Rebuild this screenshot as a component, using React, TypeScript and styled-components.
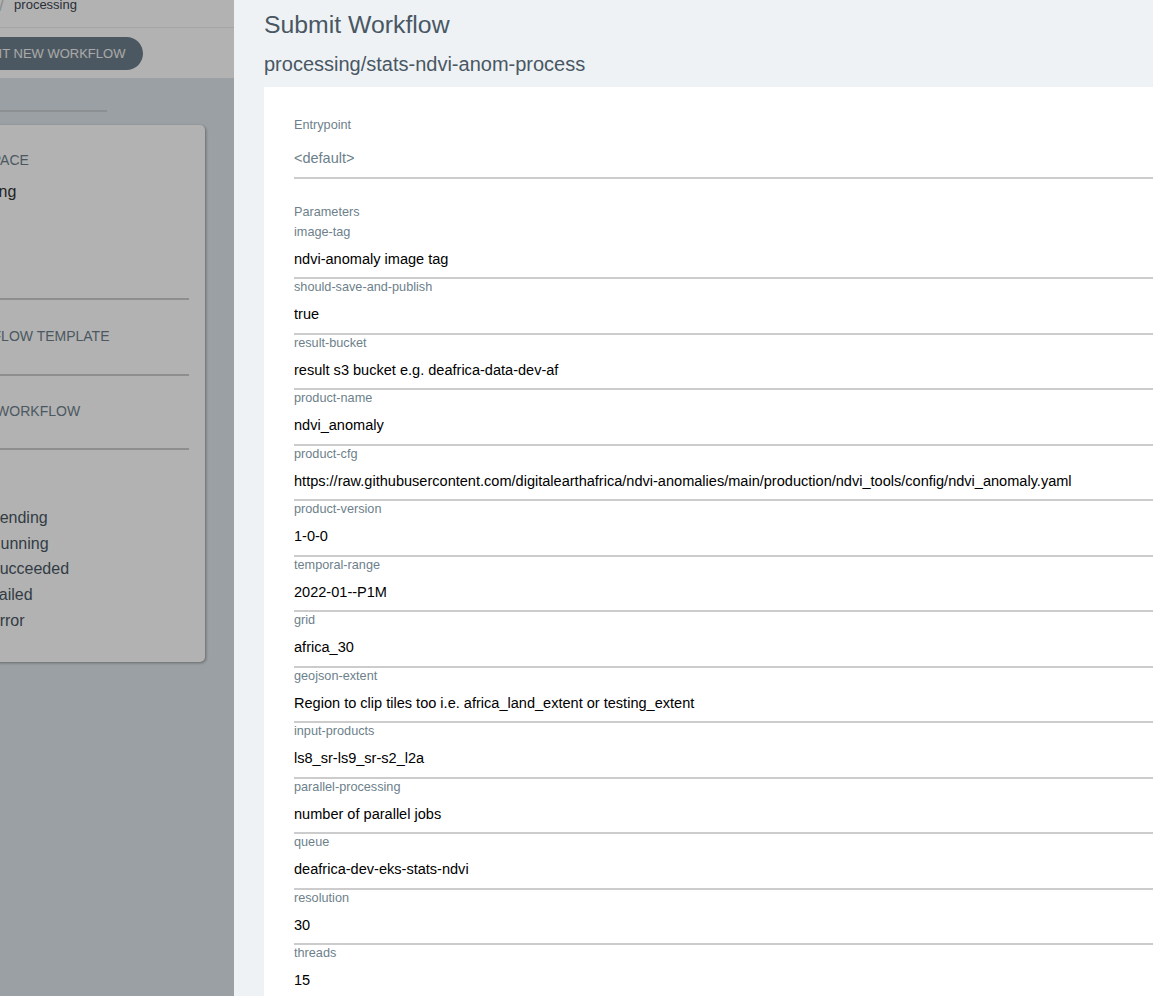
import React from "react";
import styled, { createGlobalStyle } from "styled-components";

const GlobalStyle = createGlobalStyle`
  html, body {
    margin: 0;
    padding: 0;
    width: 100%;
    height: 100%;
    overflow: hidden;
  }
  body {
    font-family: "Liberation Sans", Arial, sans-serif;
    background: #dee6eb;
  }
  * { box-sizing: border-box; }
`;

const Viewport = styled.div`
  display: flex;
  width: 100vw;
  height: 100vh;
  overflow: hidden;
`;

/* ---------- page behind the sliding panel ---------- */

const Page = styled.div`
  position: relative;
  flex: 0 0 234px;
  overflow: hidden;
  background: #dee6eb;
`;

const PageInner = styled.div`
  width: 354px;
  margin-left: -120px;
`;

const TopBar = styled.div`
  background: #fff;
`;

const Breadcrumbs = styled.div`
  display: flex;
  align-items: flex-start;
  gap: 10px;
  height: 32px;
  margin-top: -4px;
  padding-left: 52px;
  border-bottom: 1px solid #ececec;
  font-size: 13px;
  line-height: 18px;
  color: #3b4450;
`;

const Crumb = styled.span`
  color: #3b4450;
`;

const CrumbSep = styled.span`
  font-size: 18px;
  line-height: 18px;
  color: #c8ced3;
`;

const Toolbar = styled.div`
  display: flex;
  align-items: flex-start;
  height: 50px;
  padding: 9px 0 0 63px;
`;

const PillButton = styled.button`
  height: 33px;
  padding: 0 18px;
  border: none;
  border-radius: 17px;
  background: #6d7f8b;
  color: #f2f2f2;
  font-family: "Liberation Sans", Arial, sans-serif;
  font-size: 13px;
  text-transform: uppercase;
  white-space: nowrap;
`;

const Content = styled.div`
  padding: 32px 0 0 10px;
`;

const Divider = styled.div`
  width: 217px;
  height: 2px;
  background: #cbcfd2;
`;

const FilterCard = styled.div`
  width: 315px;
  height: 537px;
  margin-top: 13px;
  padding: 27px 16px 0 52px;
  background: #fff;
  border-radius: 5px;
  box-shadow: 1px 1px 3px rgba(0, 0, 0, 0.35);
`;

const FilterSection = styled.div<{ $indent?: number; $gap?: number }>`
  padding-left: ${(p) => p.$indent ?? 0}px;
  margin-top: ${(p) => p.$gap ?? 0}px;
`;

const FilterTitle = styled.div`
  font-size: 14px;
  line-height: 16px;
  color: #6d7f8b;
  text-transform: uppercase;
  white-space: nowrap;
`;

const NsValue = styled.div`
  margin: 14px 0 0 -3px;
  font-size: 16px;
  line-height: 20px;
  color: #333;
`;

const UnderlineBox = styled.div<{ $h: number }>`
  height: ${(p) => p.$h}px;
  border-bottom: 2px solid #ccc;
`;

const PhaseList = styled.div`
  margin-top: 23px;
  padding-left: 17px;
`;

const PhaseRow = styled.div`
  display: flex;
  align-items: center;
  gap: 14px;
  height: 25.75px;
  font-size: 16px;
  color: #495763;
`;

const CheckBox = styled.span`
  width: 16px;
  height: 16px;
  border: 1px solid #8fa4b1;
  border-radius: 2px;
  background: #fff;
`;

const Dimmer = styled.div`
  position: absolute;
  inset: 0;
  background: rgba(0, 0, 0, 0.3);
`;

/* ---------- sliding panel ---------- */

const Panel = styled.div`
  flex: 1 1 auto;
  min-width: 0;
  padding: 10px 0 0 30px;
  background: #eef2f5;
  overflow: hidden;
`;

const PanelTitle = styled.h3`
  margin: 0;
  font-size: 24.8px;
  line-height: 30px;
  font-weight: 400;
  color: #495763;
`;

const PanelSubtitle = styled.h4`
  margin: 12px 0 0;
  font-size: 20px;
  line-height: 24px;
  font-weight: 400;
  color: #495763;
`;

const WhiteBox = styled.div`
  width: 980px;
  margin-top: 11px;
  padding: 30px;
  background: #fff;
`;

const FieldLabel = styled.label<{ $gap?: number }>`
  display: block;
  margin-top: ${(p) => p.$gap ?? 0}px;
  font-size: 12.7px;
  line-height: 16.5px;
  color: #6d7f8b;
  white-space: nowrap;
`;

const SelectField = styled.div`
  height: 45px;
  padding-top: 14px;
  border-bottom: 2px solid #ccc;
  font-size: 14.5px;
  line-height: 20px;
  color: #6d7f8b;
`;

const ParamBlock = styled.div`
  display: flex;
  flex-direction: column;
`;

const SectionLabel = styled(FieldLabel)`
  margin-bottom: 3.5px;
`;

const ParamInput = styled.input`
  display: block;
  width: 100%;
  height: 39px;
  margin: 0;
  padding: 0;
  border: none;
  border-bottom: 2px solid #ccc;
  outline: none;
  background: transparent;
  font-family: "Liberation Sans", Arial, sans-serif;
  font-size: 14.56px;
  color: #000;
`;

const params: [string, string][] = [
  ["image-tag", "ndvi-anomaly image tag"],
  ["should-save-and-publish", "true"],
  ["result-bucket", "result s3 bucket e.g. deafrica-data-dev-af"],
  ["product-name", "ndvi_anomaly"],
  [
    "product-cfg",
    "https://raw.githubusercontent.com/digitalearthafrica/ndvi-anomalies/main/production/ndvi_tools/config/ndvi_anomaly.yaml",
  ],
  ["product-version", "1-0-0"],
  ["temporal-range", "2022-01--P1M"],
  ["grid", "africa_30"],
  ["geojson-extent", "Region to clip tiles too i.e. africa_land_extent or testing_extent"],
  ["input-products", "ls8_sr-ls9_sr-s2_l2a"],
  ["parallel-processing", "number of parallel jobs"],
  ["queue", "deafrica-dev-eks-stats-ndvi"],
  ["resolution", "30"],
  ["threads", "15"],
];

const phases = ["Pending", "Running", "Succeeded", "Failed", "Error"];

export default function App() {
  return (
    <>
      <GlobalStyle />
      <Viewport>
        <Page>
          <PageInner>
            <TopBar>
              <Breadcrumbs>
                <Crumb>workflows</Crumb>
                <CrumbSep>/</CrumbSep>
                <Crumb>processing</Crumb>
              </Breadcrumbs>
              <Toolbar>
                <PillButton>Submit new workflow</PillButton>
              </Toolbar>
            </TopBar>
            <Content>
              <Divider />
              <FilterCard>
                <FilterSection>
                  <FilterTitle>Namespace</FilterTitle>
                  <NsValue>processing</NsValue>
                </FilterSection>
                <FilterSection $gap={28}>
                  <FilterTitle>Labels</FilterTitle>
                  <UnderlineBox $h={54} />
                </FilterSection>
                <FilterSection $gap={28} $indent={7}>
                  <FilterTitle>Workflow Template</FilterTitle>
                  <UnderlineBox $h={32} />
                </FilterSection>
                <FilterSection $gap={27} $indent={9}>
                  <FilterTitle>Cron Workflow</FilterTitle>
                  <UnderlineBox $h={31} />
                </FilterSection>
                <FilterSection $gap={16}>
                  <FilterTitle>Phases</FilterTitle>
                  <PhaseList>
                    {phases.map((p) => (
                      <PhaseRow key={p}>
                        <CheckBox />
                        <span>{p}</span>
                      </PhaseRow>
                    ))}
                  </PhaseList>
                </FilterSection>
              </FilterCard>
            </Content>
          </PageInner>
          <Dimmer />
        </Page>
        <Panel>
          <PanelTitle>Submit Workflow</PanelTitle>
          <PanelSubtitle>processing/stats-ndvi-anom-process</PanelSubtitle>
          <WhiteBox>
            <FieldLabel>Entrypoint</FieldLabel>
            <SelectField>&lt;default&gt;</SelectField>
            <SectionLabel $gap={25}>Parameters</SectionLabel>
            {params.map(([name, value]) => (
              <ParamBlock key={name}>
                <FieldLabel>{name}</FieldLabel>
                <ParamInput readOnly value={value} />
              </ParamBlock>
            ))}
          </WhiteBox>
        </Panel>
      </Viewport>
    </>
  );
}
